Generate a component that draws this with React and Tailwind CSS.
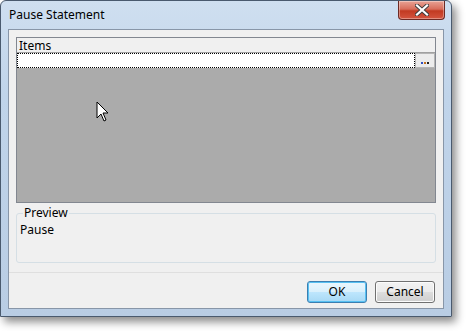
import React from 'react';

const font = { fontFamily: '"Segoe UI", "Noto Sans", "Open Sans", sans-serif' };

const Cursor = () => (
  <svg width="14" height="22" viewBox="0 0 14 22" className="absolute left-[96px] top-[101px]">
    <path d="M1 1 L1 17 L5 13 L8 20 L10 19 L7 12 L12 12 Z" fill="#fff" stroke="#000" strokeWidth="1" strokeLinejoin="round" />
  </svg>
);

const CloseButton = () => (
  <div className="absolute right-[6px] top-0 w-[47px] h-[19px] rounded-b-[4px] border border-[#6d2a24] border-t-0 flex items-center justify-center bg-[linear-gradient(#e8a395_0%,#d86d5b_45%,#c23a22_55%,#d4553f_100%)] shadow-[inset_0_0_0_1px_rgba(255,255,255,0.35)]">
    <svg width="14" height="12" viewBox="0 0 14 12">
      <path d="M2 1.5 L12 10.5 M12 1.5 L2 10.5" stroke="#3c3c3c" strokeWidth="4" strokeLinecap="square" />
      <path d="M2 1.5 L12 10.5 M12 1.5 L2 10.5" stroke="#fff" strokeWidth="2.2" strokeLinecap="square" />
    </svg>
  </div>
);

export default function App() {
  return (
    <div className="w-[466px] h-[331px] bg-white relative overflow-hidden" style={font}>
      <div className="relative w-[452px] h-[317px] rounded-t-[6px] border border-[#4a5a6e] bg-[linear-gradient(180deg,#cfdff0_0%,#c0d4ea_30%,#b9cde4_100%)] shadow-[4px_5px_8px_rgba(0,0,0,0.45)] px-[7px] pb-[7px] flex flex-col">
        <div className="h-[28px] flex items-center pl-[1px] text-[12px] text-black shrink-0">Pause Statement</div>
        <CloseButton />
        <div className="flex-1 border border-[#8896a8] bg-[#f0f0f0] flex flex-col px-[7px] pt-[7px]">
          <div className="h-[166px] border border-[#828790] flex flex-col bg-[#ababab]">
            <div className="h-[15px] bg-[#f0f0f0] border-b border-[#a0a0a0] text-[12px] leading-[15px] pl-[2px] text-black">Items</div>
            <div className="h-[15px] flex bg-white">
              <div className="flex-1 border border-dotted border-black" />
              <div className="w-[20px] bg-[#ececec] border border-[#b5b5b5] flex items-end justify-center pb-[3px] gap-[1px]">
                <span className="w-[2px] h-[2px] bg-[#3050c0]" />
                <span className="w-[2px] h-[2px] bg-[#c07020]" />
                <span className="w-[2px] h-[2px] bg-[#202020]" />
              </div>
            </div>
            <div className="flex-1 bg-[#ababab]" />
          </div>
          <div className="relative mt-[10px] h-[50px] border border-[#d5dfe5] rounded-[3px]">
            <div className="absolute -top-[8px] left-[6px] px-[1px] bg-[#f0f0f0] text-[12px] leading-[13px] text-black">Preview</div>
            <div className="pt-[9px] pl-[3px] text-[12px] leading-[13px] text-black">Pause</div>
          </div>
          <div className="mt-[9px] border-t border-[#dfdfdf] -mx-[7px]" />
          <div className="flex justify-end gap-[8px] pt-[8px] pr-[1px]">
            <button className="w-[60px] h-[22px] rounded-[3px] border border-[#3c7fb1] bg-[linear-gradient(#eaf6fd_0%,#d9f0fc_50%,#bee6fd_51%,#a7d9f5_100%)] shadow-[inset_0_0_0_1px_#58c1f2] text-[12px] text-black">OK</button>
            <button className="w-[60px] h-[22px] rounded-[3px] border border-[#707070] bg-[linear-gradient(#f2f2f2_0%,#ebebeb_50%,#dddddd_51%,#cfcfcf_100%)] shadow-[inset_0_0_0_1px_#fcfcfc] text-[12px] text-black">Cancel</button>
          </div>
        </div>
      </div>
      <Cursor />
    </div>
  );
}
